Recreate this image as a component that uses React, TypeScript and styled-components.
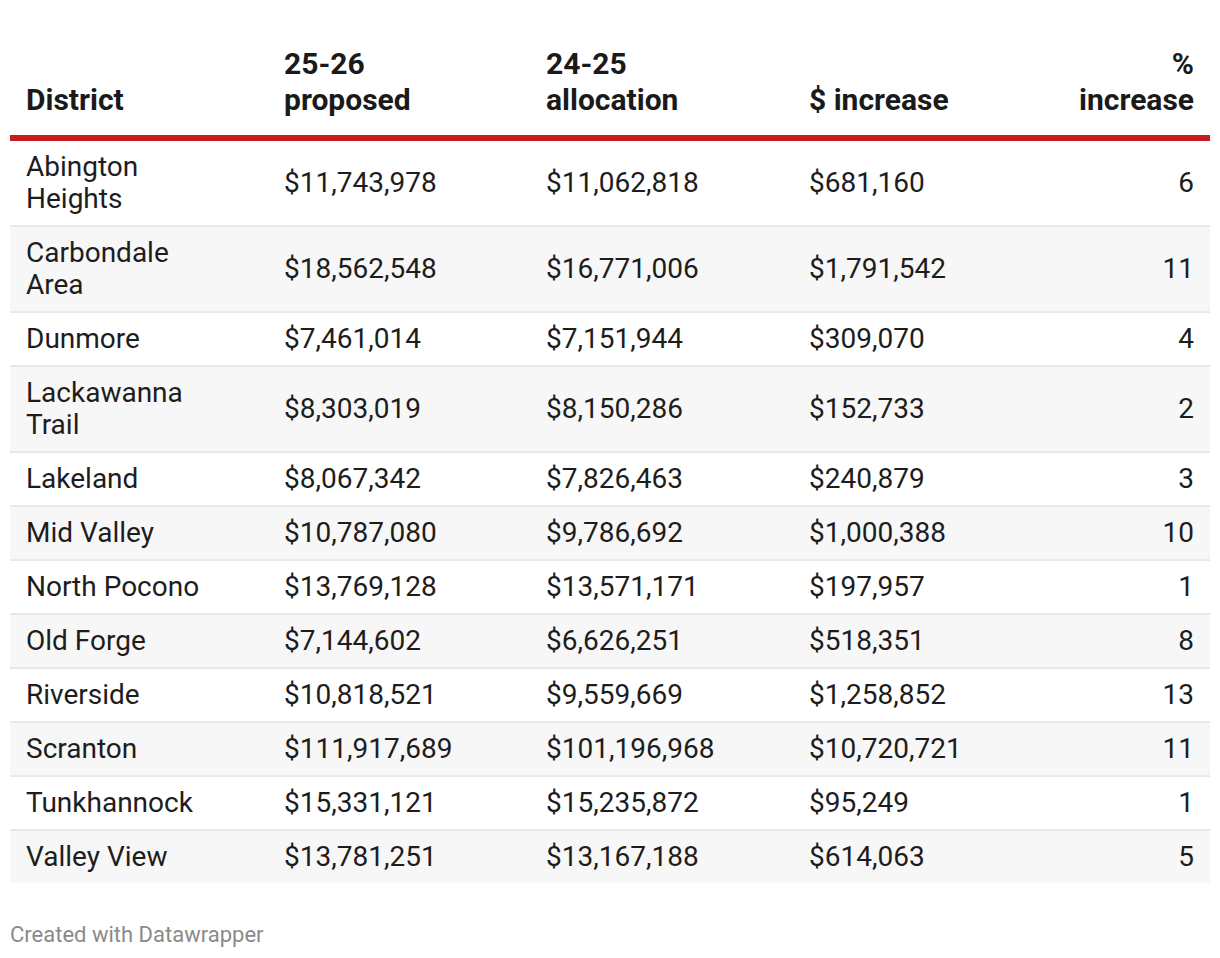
import React from "react"
import styled, { createGlobalStyle } from "styled-components"

const GlobalStyle = createGlobalStyle`
  *, *::before, *::after {
    box-sizing: border-box;
  }
  body {
    margin: 0;
    background: #ffffff;
    font-family: Roboto, "Liberation Sans", sans-serif;
    color: #1d1d1d;
  }
`

const Wrapper = styled.div`
  width: 1220px;
  padding: 46px 10px 0;
`

const Table = styled.table`
  width: 100%;
  border-collapse: collapse;
  table-layout: fixed;
`

const Head = styled.thead`
  border-bottom: 6px solid #c71e1d;
`

const HeadCell = styled.th<{ $align?: string; $width?: number }>`
  width: ${props => (props.$width ? `${props.$width}px` : "auto")};
  text-align: ${props => props.$align || "left"};
  vertical-align: bottom;
  font-size: 30px;
  line-height: 36px;
  font-weight: 700;
  color: #1a1a1a;
  padding: 0 15px 17px;

  &:first-child {
    padding-left: 16px;
  }
  &:last-child {
    padding-right: 16px;
  }
`

const Row = styled.tr<{ $striped: boolean }>`
  background: ${props => (props.$striped ? "#f7f7f7" : "#ffffff")};
  border-bottom: 2px solid #e9e9e9;

  &:last-child {
    border-bottom: none;
  }
`

const Cell = styled.td<{ $align?: string }>`
  text-align: ${props => props.$align || "left"};
  vertical-align: middle;
  font-size: 28px;
  line-height: 32px;
  padding: 10px 15px;

  &:last-child {
    padding-right: 16px;
  }
`

const NameCell = styled(Cell)`
  padding-left: 16px;
  padding-right: 45px;
`

const Footer = styled.div`
  margin-top: 39px;
  font-size: 22px;
  line-height: 26px;
  color: #8a8a8a;
`

const rows = [
  ["Abington Heights", "$11,743,978", "$11,062,818", "$681,160", "6"],
  ["Carbondale Area", "$18,562,548", "$16,771,006", "$1,791,542", "11"],
  ["Dunmore", "$7,461,014", "$7,151,944", "$309,070", "4"],
  ["Lackawanna Trail", "$8,303,019", "$8,150,286", "$152,733", "2"],
  ["Lakeland", "$8,067,342", "$7,826,463", "$240,879", "3"],
  ["Mid Valley", "$10,787,080", "$9,786,692", "$1,000,388", "10"],
  ["North Pocono", "$13,769,128", "$13,571,171", "$197,957", "1"],
  ["Old Forge", "$7,144,602", "$6,626,251", "$518,351", "8"],
  ["Riverside", "$10,818,521", "$9,559,669", "$1,258,852", "13"],
  ["Scranton", "$111,917,689", "$101,196,968", "$10,720,721", "11"],
  ["Tunkhannock", "$15,331,121", "$15,235,872", "$95,249", "1"],
  ["Valley View", "$13,781,251", "$13,167,188", "$614,063", "5"],
]

export default function App() {
  return (
    <Wrapper>
      <GlobalStyle />
      <Table>
        <Head>
          <tr>
            <HeadCell $width={259}>District</HeadCell>
            <HeadCell $width={262}>
              25-26
              <br />
              proposed
            </HeadCell>
            <HeadCell $width={263}>
              24-25
              <br />
              allocation
            </HeadCell>
            <HeadCell $width={266}>$ increase</HeadCell>
            <HeadCell $align="right">
              %
              <br />
              increase
            </HeadCell>
          </tr>
        </Head>
        <tbody>
          {rows.map((row, i) => (
            <Row key={row[0]} $striped={i % 2 === 1}>
              <NameCell>{row[0]}</NameCell>
              <Cell>{row[1]}</Cell>
              <Cell>{row[2]}</Cell>
              <Cell>{row[3]}</Cell>
              <Cell $align="right">{row[4]}</Cell>
            </Row>
          ))}
        </tbody>
      </Table>
      <Footer>Created with Datawrapper</Footer>
    </Wrapper>
  )
}
